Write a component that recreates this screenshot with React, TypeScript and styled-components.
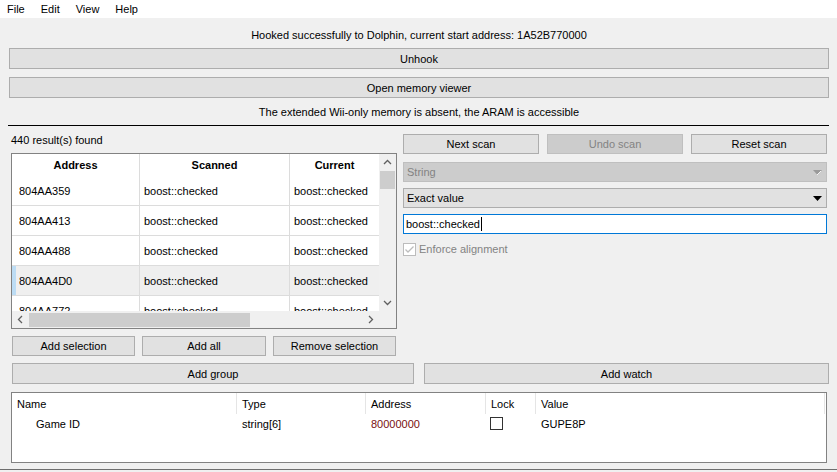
import { FunctionComponent } from 'react';
import styled, { createGlobalStyle } from 'styled-components';

const GlobalStyle = createGlobalStyle`
  html, body {
    margin: 0;
    padding: 0;
    background: #f0f0f0;
  }
  body {
    font-family: "Liberation Sans", Arial, sans-serif;
    font-size: 11px;
    color: #000;
  }
  * {
    box-sizing: border-box;
  }
`;

const Window = styled.div`
  width: 837px;
  height: 472px;
  overflow: hidden;
  display: flex;
  flex-direction: column;
  background: #f0f0f0;
`;

const MenuBar = styled.div`
  height: 18px;
  background: #fff;
  display: flex;
  align-items: center;
  padding-left: 7px;
`;

const MenuItem = styled.span`
  margin-right: 16px;
  line-height: 18px;
`;

const Body = styled.div`
  flex: 1;
  display: flex;
  flex-direction: column;
  padding: 0 8px 0 9px;
`;

const CenterLabel = styled.div<{ $top: number }>`
  margin-top: ${(p) => p.$top}px;
  height: 18px;
  line-height: 18px;
  text-align: center;
`;

const Button = styled.div<{ $disabled?: boolean }>`
  height: 21px;
  display: flex;
  align-items: center;
  justify-content: center;
  background: ${(p) => (p.$disabled ? '#cccccc' : '#e1e1e1')};
  border: 1px solid ${(p) => (p.$disabled ? '#bfbfbf' : '#adadad')};
  color: ${(p) => (p.$disabled ? '#838383' : '#000')};
  white-space: nowrap;
`;

const WideButton = styled(Button)<{ $top: number }>`
  margin-top: ${(p) => p.$top}px;
`;

const Separator = styled.div`
  margin: 4px 0 0 -1px;
  height: 1px;
  background: #000;
`;

const Middle = styled.div`
  display: flex;
  gap: 6px;
  margin-left: 2px;
`;

const LeftColumn = styled.div`
  width: 386px;
  display: flex;
  flex-direction: column;
`;

const ResultsLabel = styled.div`
  margin-top: 5px;
  height: 18px;
  line-height: 18px;
`;

const TableFrame = styled.div`
  margin-top: 4px;
  height: 176px;
  border: 1px solid #828282;
  background: #fff;
  display: grid;
  grid-template-columns: 367px 17px;
  grid-template-rows: 157px 17px;
`;

const Viewport = styled.div`
  overflow: hidden;
  position: relative;
`;

const TableRow = styled.div<{ $header?: boolean; $current?: boolean }>`
  display: grid;
  grid-template-columns: 128px 150px 89px;
  height: ${(p) => (p.$header ? 22 : 30)}px;
  background: ${(p) => (p.$current ? '#efefef' : '#fff')};
  border-bottom: ${(p) => (p.$header ? 'none' : '1px solid #dcdcdc')};
  position: relative;
  font-weight: ${(p) => (p.$header ? 700 : 400)};
`;

const CurrentMark = styled.div`
  position: absolute;
  left: 0;
  top: 0;
  bottom: 0;
  width: 4px;
  background: #bcdcf4;
`;

const Cell = styled.div<{ $header?: boolean; $first?: boolean; $last?: boolean }>`
  display: flex;
  align-items: center;
  justify-content: ${(p) => (p.$header ? 'center' : 'flex-start')};
  padding-left: ${(p) => (p.$header ? 0 : p.$first ? 7 : 4)}px;
  border-right: ${(p) => (p.$last ? 'none' : '1px solid #dcdcdc')};
  white-space: nowrap;
  overflow: hidden;
`;

const VScroll = styled.div`
  background: #f0f0f0;
  display: flex;
  flex-direction: column;
  align-items: center;
`;

const HScroll = styled.div`
  background: #f0f0f0;
  display: flex;
  align-items: center;
`;

const Corner = styled.div`
  background: #f0f0f0;
`;

const ArrowBox = styled.div`
  width: 17px;
  height: 17px;
  display: flex;
  align-items: center;
  justify-content: center;
  flex-shrink: 0;
`;

const VThumb = styled.div`
  width: 15px;
  height: 18px;
  background: #cdcdcd;
`;

const HThumb = styled.div`
  width: 221px;
  height: 14px;
  background: #cdcdcd;
`;

const Spacer = styled.div`
  flex: 1;
`;

const ButtonRow = styled.div<{ $cols: string; $gap: number; $top: number; $left?: number }>`
  display: grid;
  grid-template-columns: ${(p) => p.$cols};
  gap: ${(p) => p.$gap}px;
  margin-top: ${(p) => p.$top}px;
  margin-left: ${(p) => p.$left ?? 0}px;
`;

const SmallButtons = styled(ButtonRow)`
  padding: 0 1px;
  & > div {
    height: 20px;
  }
`;

const RightColumn = styled.div`
  width: 424px;
  display: flex;
  flex-direction: column;
  padding-top: 8px;
`;

const ScanButtons = styled(ButtonRow)`
  & > div {
    height: 20px;
  }
`;

const Combo = styled.div<{ $disabled?: boolean; $top: number }>`
  margin-top: ${(p) => p.$top}px;
  height: 20px;
  display: flex;
  align-items: center;
  padding: 0 4px 0 3px;
  background: ${(p) => (p.$disabled ? '#cccccc' : '#e1e1e1')};
  border: 1px solid ${(p) => (p.$disabled ? '#bfbfbf' : '#adadad')};
  color: ${(p) => (p.$disabled ? '#838383' : '#000')};
`;

const TextInput = styled.div`
  margin-top: 6px;
  height: 20px;
  display: flex;
  align-items: center;
  padding-left: 2px;
  background: #fff;
  border: 1px solid #0078d7;
`;

const Caret = styled.span`
  display: inline-block;
  width: 1px;
  height: 14px;
  background: #000;
  margin-left: 1px;
`;

const CheckRow = styled.div`
  margin-top: 8px;
  height: 14px;
  display: flex;
  align-items: center;
  gap: 3px;
  color: #838383;
`;

const CheckBox = styled.div<{ $disabled?: boolean }>`
  width: 13px;
  height: 13px;
  border: 1px solid ${(p) => (p.$disabled ? '#bcbcbc' : '#333')};
  background: #fff;
  display: flex;
  align-items: center;
  justify-content: center;
`;

const WatchFrame = styled.div`
  margin: 8px 2px 0 2px;
  height: 71px;
  border: 1px solid #828282;
  background: #fff;
`;

const WatchRow = styled.div<{ $header?: boolean }>`
  display: grid;
  grid-template-columns: 225px 129px 120px 50px 289px;
  height: ${(p) => (p.$header ? 21 : 19)}px;
`;

const WatchCell = styled.div<{ $header?: boolean; $indent?: number; $color?: string }>`
  display: flex;
  align-items: center;
  padding-left: ${(p) => p.$indent ?? 5}px;
  border-right: ${(p) => (p.$header ? '1px solid #e5e5e5' : 'none')};
  color: ${(p) => p.$color ?? '#000'};
  white-space: nowrap;
`;

const Footer = styled.div`
  height: 3px;
  border-top: 1px solid #6e6e6e;
`;

const Chevron: FunctionComponent<{ dir: 'up' | 'down' | 'left' | 'right'; color?: string }> = ({ dir, color = '#606060' }) => {
  const points = {
    up: '1,5 4.5,1.5 8,5',
    down: '1,2 4.5,5.5 8,2',
    left: '5,1 1.5,4.5 5,8',
    right: '2,1 5.5,4.5 2,8',
  }[dir];
  const w = dir === 'up' || dir === 'down' ? 9 : 7;
  const h = dir === 'up' || dir === 'down' ? 7 : 9;
  return (
    <svg width={w} height={h} viewBox={`0 0 ${w} ${h}`}>
      <polyline points={points} fill="none" stroke={color} strokeWidth="1.3" />
    </svg>
  );
};

const DropArrow: FunctionComponent<{ disabled?: boolean }> = ({ disabled }) => (
  <svg width="9" height="5" viewBox="0 0 9 5">
    <polygon points="0,0 9,0 4.5,5" fill={disabled ? '#9a9a9a' : '#000'} />
    {disabled && <line x1="4" y1="5" x2="8" y2="1" stroke="#f4f4f4" strokeWidth="1" />}
  </svg>
);

const results = [
  { address: '804AA359', scanned: 'boost::checked', current: 'boost::checked' },
  { address: '804AA413', scanned: 'boost::checked', current: 'boost::checked' },
  { address: '804AA488', scanned: 'boost::checked', current: 'boost::checked' },
  { address: '804AA4D0', scanned: 'boost::checked', current: 'boost::checked' },
  { address: '804AA772', scanned: 'boost::checked', current: 'boost::checked' },
];

const App: FunctionComponent = () => {
  return (
    <>
      <GlobalStyle />
      <Window>
        <MenuBar>
          {['File', 'Edit', 'View', 'Help'].map((m) => (
            <MenuItem key={m}>{m}</MenuItem>
          ))}
        </MenuBar>
        <Body>
          <CenterLabel $top={8}>Hooked successfully to Dolphin, current start address: 1A52B770000</CenterLabel>
          <WideButton $top={4}>Unhook</WideButton>
          <WideButton $top={8}>Open memory viewer</WideButton>
          <CenterLabel $top={5}>The extended Wii-only memory is absent, the ARAM is accessible</CenterLabel>
          <Separator />

          <Middle>
            <LeftColumn>
              <ResultsLabel>440 result(s) found</ResultsLabel>
              <TableFrame>
                <Viewport>
                  <TableRow $header>
                    <Cell $header>Address</Cell>
                    <Cell $header>Scanned</Cell>
                    <Cell $header $last>Current</Cell>
                  </TableRow>
                  {results.map((r, i) => (
                    <TableRow key={r.address} $current={i === 3}>
                      {i === 3 && <CurrentMark />}
                      <Cell $first>{r.address}</Cell>
                      <Cell>{r.scanned}</Cell>
                      <Cell $last>{r.current}</Cell>
                    </TableRow>
                  ))}
                </Viewport>
                <VScroll>
                  <ArrowBox>
                    <Chevron dir="up" />
                  </ArrowBox>
                  <VThumb />
                  <Spacer />
                  <ArrowBox>
                    <Chevron dir="down" />
                  </ArrowBox>
                </VScroll>
                <HScroll>
                  <ArrowBox>
                    <Chevron dir="left" />
                  </ArrowBox>
                  <HThumb />
                  <Spacer />
                  <ArrowBox>
                    <Chevron dir="right" />
                  </ArrowBox>
                </HScroll>
                <Corner />
              </TableFrame>
              <SmallButtons $cols="123px 124px 123px" $gap={7} $top={7}>
                <Button>Add selection</Button>
                <Button>Add all</Button>
                <Button>Remove selection</Button>
              </SmallButtons>
            </LeftColumn>

            <RightColumn>
              <ScanButtons $cols="1fr 1fr 1fr" $gap={8} $top={0}>
                <Button>Next scan</Button>
                <Button $disabled>Undo scan</Button>
                <Button>Reset scan</Button>
              </ScanButtons>
              <Combo $disabled $top={8}>
                String
                <Spacer />
                <DropArrow disabled />
              </Combo>
              <Combo $top={6}>
                Exact value
                <Spacer />
                <DropArrow />
              </Combo>
              <TextInput>
                boost::checked
                <Caret />
              </TextInput>
              <CheckRow>
                <CheckBox $disabled>
                  <svg width="11" height="11" viewBox="0 0 11 11">
                    <polyline points="1.5,5.5 4,8 9.5,2.5" fill="none" stroke="#bcbcbc" strokeWidth="1.3" />
                  </svg>
                </CheckBox>
                Enforce alignment
              </CheckRow>
            </RightColumn>
          </Middle>

          <ButtonRow $cols="402px 1fr" $gap={10} $top={7} $left={3}>
            <Button>Add group</Button>
            <Button>Add watch</Button>
          </ButtonRow>

          <WatchFrame>
            <WatchRow $header>
              <WatchCell $header>Name</WatchCell>
              <WatchCell $header>Type</WatchCell>
              <WatchCell $header>Address</WatchCell>
              <WatchCell $header>Lock</WatchCell>
              <WatchCell $header>Value</WatchCell>
            </WatchRow>
            <WatchRow>
              <WatchCell $indent={24}>Game ID</WatchCell>
              <WatchCell>string[6]</WatchCell>
              <WatchCell $color="#7a1010">80000000</WatchCell>
              <WatchCell $indent={4}>
                <CheckBox />
              </WatchCell>
              <WatchCell>GUPE8P</WatchCell>
            </WatchRow>
          </WatchFrame>
        </Body>
        <Footer />
      </Window>
    </>
  );
};

export default App;
